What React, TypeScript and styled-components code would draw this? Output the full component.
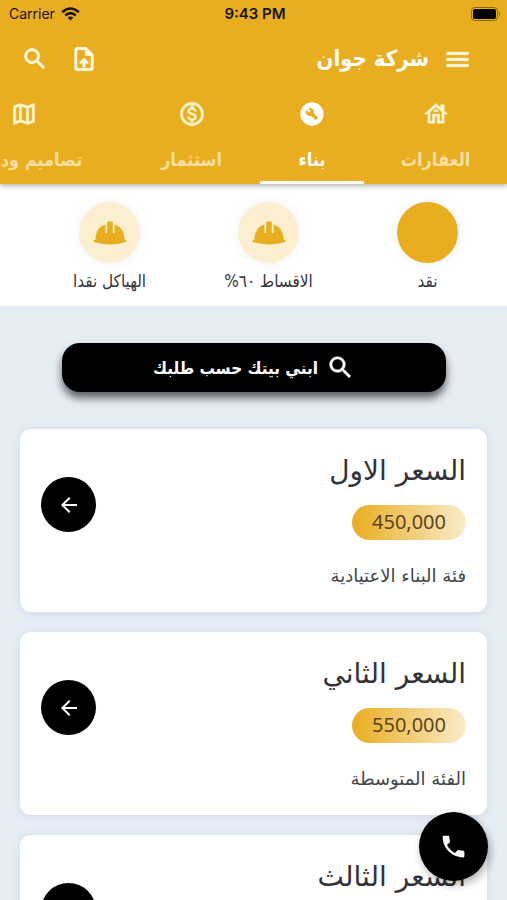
import React from "react";
import styled, { createGlobalStyle } from "styled-components";
import {
  MdArrowBack,
  MdBuildCircle,
  MdMenu,
  MdOutlineHouse,
  MdOutlineMap,
  MdOutlineMonetizationOn,
  MdOutlineUploadFile,
  MdPhone,
  MdSearch,
} from "react-icons/md";

const gold = "#e9ad20";
const regular = '"DejaVu Sans", sans-serif';
const compact = '"DejaVu Sans Condensed", "DejaVu Sans", sans-serif';

const GlobalStyle = createGlobalStyle`
  * { box-sizing: border-box; }
  body {
    margin: 0;
    background: #e5edf5;
    color: #333338;
    font-family: ${regular};
  }
  button { font: inherit; color: inherit; border: 0; padding: 0; cursor: pointer; }
`;

const Screen = styled.div`
  height: 100vh;
  display: flex;
  flex-direction: column;
  overflow: hidden;
`;

const Header = styled.header`
  position: relative;
  flex: none;
  background: ${gold};
  color: #fff;
  box-shadow: 0 2px 5px rgba(0, 0, 0, 0.3);
`;

const StatusBar = styled.div`
  display: grid;
  grid-template-columns: 1fr auto 1fr;
  align-items: center;
  height: 27px;
  padding: 0 6px 0 9px;
  color: #17130a;
  font: 14px/20px Inter, sans-serif;
`;

const Carrier = styled.span`
  display: flex;
  align-items: center;
  gap: 6px;
`;

const Clock = styled.time`
  font-size: 15px;
  font-weight: 600;
`;

const BatterySlot = styled.span`
  display: flex;
  justify-content: flex-end;
`;

const AppBar = styled.div`
  display: flex;
  align-items: center;
  gap: 14px;
  height: 64px;
  padding: 0 35px 0 21px;
`;

const Title = styled.h1`
  flex: 1;
  margin: 0;
  font-family: ${compact};
  font-size: 22px;
  line-height: 28px;
  font-weight: 700;
`;

const IconButton = styled.button`
  display: flex;
  background: none;
  color: #fffbe6;

  path:not([fill="none"]) { stroke: currentColor; stroke-width: 0.5px; }
`;

const Actions = styled.div`
  display: flex;
  gap: 21px;
`;

const Tabs = styled.nav`
  display: flex;
  height: 93px;
  overflow: hidden;
`;

const Tab = styled.button<{ $active?: boolean; $width: number }>`
  flex: 0 0 ${(p) => p.$width}px;
  display: flex;
  flex-direction: column;
  align-items: center;
  gap: 19px;
  padding-top: 9px;
  background: none;
  border-bottom: 3px solid ${(p) => (p.$active ? "#fff" : "transparent")};
  color: ${(p) => (p.$active ? "#fff" : "#fff6d2")};

  path:not([fill="none"]) {
    stroke: currentColor;
    stroke-width: ${(p) => (p.$active ? 0 : "0.4px")};
  }
`;

const TabLabel = styled.span<{ $active?: boolean }>`
  font-family: ${compact};
  font-size: 18px;
  line-height: 26px;
  font-weight: 700;
  white-space: nowrap;
  color: ${(p) => (p.$active ? "#fff" : "#f9dfa0")};
`;

const Content = styled.main`
  flex: 1;
  min-height: 0;
  overflow-y: auto;
  scrollbar-width: none;
`;

const Categories = styled.div`
  display: flex;
  height: 122px;
  padding-top: 18px;
  background: #fff;
  overflow: hidden;
`;

const Category = styled.button`
  flex: 0 0 159px;
  display: flex;
  flex-direction: column;
  align-items: center;
  gap: 6px;
  background: none;
`;

const CategoryDisc = styled.span<{ $active?: boolean }>`
  display: flex;
  align-items: center;
  justify-content: center;
  width: 61px;
  height: 61px;
  border-radius: 50%;
  background: ${(p) => (p.$active ? gold : "#fcefd0")};
  color: ${gold};
  box-shadow: 0 0 12px rgba(120, 130, 190, 0.1);
`;

const CategoryLabel = styled.span`
  font-family: ${compact};
  font-size: 17px;
  line-height: 24px;
  white-space: nowrap;
`;

const SearchButton = styled.button`
  display: flex;
  align-items: center;
  justify-content: center;
  gap: 8px;
  width: calc(100% - 123px);
  height: 49px;
  margin: 37px 61px;
  border-radius: 18px;
  background: #000;
  color: #fff;
  font-family: ${compact};
  font-size: 17px;
  font-weight: 700;
  box-shadow: 0 6px 8px rgba(0, 0, 0, 0.6);

  path:not([fill="none"]) { stroke: currentColor; stroke-width: 0.4px; }
`;

const Cards = styled.div`
  display: flex;
  flex-direction: column;
  gap: 20px;
  padding: 0 20px 20px;
`;

const Card = styled.article`
  display: flex;
  align-items: flex-start;
  justify-content: space-between;
  min-height: 183px;
  padding: 21px;
  border-radius: 11px;
  background: #fff;
  box-shadow: 0 1px 8px rgba(90, 90, 150, 0.14);
`;

const CardText = styled.div`
  display: flex;
  flex-direction: column;
  align-items: flex-start;
`;

const CardTitle = styled.h2`
  margin: 0 0 13px;
  font-size: 28px;
  line-height: 42px;
  font-weight: 400;
`;

const Price = styled.span`
  height: 35px;
  padding: 0 20px;
  border-radius: 18px;
  background: linear-gradient(to right, ${gold}, #fbebc8);
  color: #5c4520;
  font: 20px/34px "Noto Sans", sans-serif;
`;

const CardNote = styled.p`
  margin: 23px 0 0;
  font-size: 18px;
  line-height: 26px;
  color: #444449;
`;

const ArrowButton = styled.button`
  flex: none;
  display: flex;
  align-items: center;
  justify-content: center;
  width: 55px;
  height: 55px;
  margin-top: 27px;
  border-radius: 50%;
  background: #000;
  color: #fff;
`;

const CallButton = styled.button`
  position: fixed;
  right: 19px;
  bottom: 19px;
  display: flex;
  align-items: center;
  justify-content: center;
  width: 69px;
  height: 69px;
  border-radius: 50%;
  background: #000;
  color: #fff;
  box-shadow: 2px 4px 8px rgba(0, 0, 0, 0.3);
`;

const WifiIcon = () => (
  <svg width="19" height="14" viewBox="0 0 19 14" fill="none" stroke="currentColor" strokeWidth="2.6" aria-hidden="true">
    <path d="M1.2 5.3Q9.5-2.3 17.8 5.3" />
    <path d="M4.3 8.5Q9.5 3.9 14.7 8.5" />
    <path d="M9.5 13.6L6.6 10.6Q9.5 8.3 12.4 10.6Z" fill="currentColor" stroke="none" />
  </svg>
);

const BatteryIcon = () => (
  <svg width="30" height="14" viewBox="0 0 30 14" aria-label="Battery full">
    <rect x="0.5" y="0.5" width="26" height="13" rx="3.5" fill="none" stroke="#8a6914" />
    <rect x="2" y="2" width="23" height="10" rx="2" fill="#000" />
    <path d="M28 4.5q2 2.5 0 5z" fill="#8a6914" />
  </svg>
);

const HelmetIcon = () => (
  <svg width="34" height="24" viewBox="0 0 34 24" fill="currentColor" aria-hidden="true">
    <path d="M14.2 0.8Q17 0 19.8 0.8V12H21.6V3.6C28 5.500 31.500 11 31.500 18.500L33.300 19.200Q33.800 20.300 33 21Q26 23.400 17 23.400Q8 23.400 1 21Q0.200 20.300 0.700 19.200L2.500 18.500C2.500 11 6 5.500 12.400 3.600V12H14.200Z" />
  </svg>
);

const tabs = [
  { label: "العقارات", icon: MdOutlineHouse, width: 143 },
  { label: "بناء", icon: MdBuildCircle, width: 104, active: true },
  { label: "استثمار", icon: MdOutlineMonetizationOn, width: 137 },
  { label: "تصاميم وديكور", icon: MdOutlineMap, width: 198 },
];

const categories = [
  { label: "نقد", active: true },
  { label: "الاقساط ٦٠%" },
  { label: "الهياكل نقدا" },
];

const offers = [
  { title: "السعر الاول", price: "450,000", note: "فئة البناء الاعتيادية" },
  { title: "السعر الثاني", price: "550,000", note: "الفئة المتوسطة" },
  { title: "السعر الثالث", price: "650,000", note: "الفئة الممتازة" },
];

export default function App() {
  return (
    <Screen dir="rtl" lang="ar">
      <GlobalStyle />
      <Header>
        <StatusBar dir="ltr">
          <Carrier>
            Carrier
            <WifiIcon />
          </Carrier>
          <Clock>9:43 PM</Clock>
          <BatterySlot>
            <BatteryIcon />
          </BatterySlot>
        </StatusBar>
        <AppBar>
          <IconButton aria-label="القائمة">
            <MdMenu size={29} />
          </IconButton>
          <Title>شركة جوان</Title>
          <Actions>
            <IconButton aria-label="رفع ملف">
              <MdOutlineUploadFile size={28} />
            </IconButton>
            <IconButton aria-label="بحث">
              <MdSearch size={28} />
            </IconButton>
          </Actions>
        </AppBar>
        <Tabs>
          {tabs.map(({ label, icon: Icon, width, active }) => (
            <Tab key={label} $active={active} $width={width}>
              <Icon size={28} />
              <TabLabel $active={active}>{label}</TabLabel>
            </Tab>
          ))}
        </Tabs>
      </Header>
      <Content>
        <Categories>
          {categories.map(({ label, active }) => (
            <Category key={label}>
              <CategoryDisc $active={active}>{!active && <HelmetIcon />}</CategoryDisc>
              <CategoryLabel>{label}</CategoryLabel>
            </Category>
          ))}
        </Categories>
        <SearchButton>
          <MdSearch size={29} />
          ابني بيتك حسب طلبك
        </SearchButton>
        <Cards>
          {offers.map(({ title, price, note }) => (
            <Card key={title}>
              <CardText>
                <CardTitle>{title}</CardTitle>
                <Price>{price}</Price>
                <CardNote>{note}</CardNote>
              </CardText>
              <ArrowButton aria-label={title}>
                <MdArrowBack size={24} />
              </ArrowButton>
            </Card>
          ))}
        </Cards>
      </Content>
      <CallButton aria-label="اتصال">
        <MdPhone size={29} />
      </CallButton>
    </Screen>
  );
}
